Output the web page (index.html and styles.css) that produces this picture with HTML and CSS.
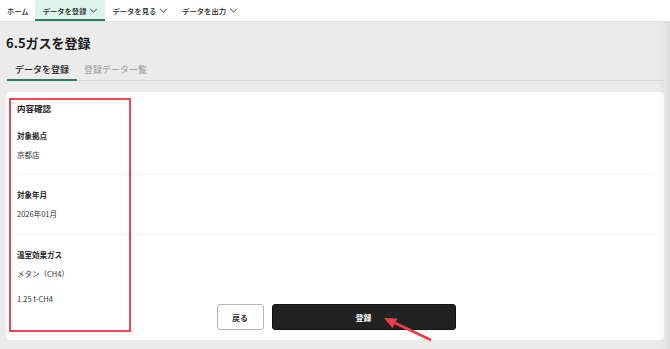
FILE: index.html
```html
<!DOCTYPE html>
<html lang="ja">
<head>
  <meta charset="UTF-8" />
  <title>6.5ガスを登録</title>
  <link rel="stylesheet" href="styles.css">
</head>
<body>
  <nav class="topnav">
    <a class="nav-item home">ホーム</a>
    <a class="nav-item active">データを登録 <svg class="chev" viewBox="0 0 10 6"><path d="M1 1l4 4 4-4" /></svg></a>
    <a class="nav-item">データを見る <svg class="chev" viewBox="0 0 10 6"><path d="M1 1l4 4 4-4" /></svg></a>
    <a class="nav-item">データを出力 <svg class="chev" viewBox="0 0 10 6"><path d="M1 1l4 4 4-4" /></svg></a>
  </nav>

  <main class="page">
    <h1 class="title">6.5ガスを登録</h1>

    <div class="tabs">
      <div class="tab active">データを登録</div>
      <div class="tab">登録データ一覧</div>
    </div>

    <section class="card">
      <h2 class="card-title">内容確認</h2>

      <div class="group first">
        <div class="label">対象拠点</div>
        <div class="value">京都店</div>
      </div>

      <div class="group second">
        <div class="label">対象年月</div>
        <div class="value">2026年01月</div>
      </div>

      <div class="group last">
        <div class="label">温室効果ガス</div>
        <div class="value">メタン（CH4）</div>
        <div class="value amount">1.25 t-CH4</div>
      </div>

      <div class="actions">
        <button class="btn btn-back">戻る</button>
        <button class="btn btn-submit">登録</button>
      </div>

      <div class="highlight"></div>
    </section>
  </main>

  <svg class="pointer" viewBox="0 0 670 349">
    <line x1="431" y1="340" x2="395" y2="323" />
    <path d="M384 318 L397.5 318.5 L392.5 328 Z" />
  </svg>

  <div class="edge-shadow"></div>
</body>
</html>
```

FILE: styles.css
```css
body {
  margin: 0;
  height: 349px;
  overflow: hidden;
  background: #ebebeb;
  font-family: "Noto Sans CJK JP", "Noto Sans", sans-serif;
  color: #222;
  position: relative;
}

.topnav {
  display: flex;
  height: 21px;
  background: #fff;
  box-shadow: 0 1px 1px rgba(0,0,0,0.06);
}

.nav-item {
  display: flex;
  align-items: center;
  gap: 2px;
  padding: 0 7px;
  font-size: 7.3px;
  font-weight: 500;
  color: #222;
  white-space: nowrap;
  box-sizing: border-box;
  height: 21px;
}

.nav-item.home {
  padding: 0 6px 0 7px;
}

.nav-item.active {
  background: #ddf4ec;
  border-bottom: 2px solid #2f7a60;
  padding: 2px 7px 0 8px;
}

.chev {
  width: 9px;
  height: 5px;
  margin-left: 1px;
  fill: none;
  stroke: #333;
  stroke-width: 1.2;
}

.page {
  padding: 0 6px;
}

.title {
  margin: 0;
  padding-top: 13px;
  font-size: 13px;
  line-height: 18px;
  font-weight: 700;
  color: #1a1a1a;
}

.tabs {
  display: flex;
  margin-top: 9px;
  margin-right: 1px;
  border-bottom: 1px solid #d6d6d6;
}

.tab {
  padding: 0 7px;
  font-size: 9px;
  line-height: 18px;
  color: #999;
}

.tab.active {
  color: #222;
  font-weight: 500;
  border-bottom: 2px solid #2f7a60;
  margin-bottom: -1px;
  padding: 0 8px;
  margin-left: 1px;
}

.card {
  position: relative;
  margin-top: 11px;
  height: 248px;
  box-sizing: border-box;
  padding: 10px 9px 12px 11px;
  background: #fff;
  border-radius: 4px;
}

.card-title {
  margin: 0;
  font-size: 8.5px;
  line-height: 12px;
  font-weight: 700;
}

.group {
  border-bottom: 1px solid #f1f1f1;
  padding-bottom: 13px;
  margin-top: 14px;
}

.group.first {
  margin-top: 16px;
}

.group.second {
  padding-bottom: 14px;
}

.group.last {
  border-bottom: none;
  padding-bottom: 0;
}

.label {
  font-size: 7.5px;
  line-height: 12px;
  font-weight: 700;
}

.value {
  margin-top: 7px;
  font-size: 7.5px;
  line-height: 12px;
  color: #333;
}

.value.amount {
  margin-top: 13px;
}

.actions {
  display: flex;
  justify-content: center;
  gap: 8px;
  margin-top: -1px;
}

.btn {
  height: 26px;
  border-radius: 3px;
  font-family: inherit;
  font-size: 8px;
  font-weight: 700;
}

.btn-back {
  width: 47px;
  background: #fff;
  border: 1px solid #b5b5b5;
  color: #333;
}

.btn-submit {
  width: 184px;
  background: #222;
  border: 1px solid #111;
  color: #fff;
}

/* annotation box */
.highlight {
  position: absolute;
  left: 3px;
  top: 6px;
  width: 122px;
  height: 234px;
  border: 2px solid #ef4452;
  box-sizing: border-box;
}

.pointer {
  position: absolute;
  left: 0;
  top: 0;
  width: 670px;
  height: 349px;
  pointer-events: none;
}

.pointer line {
  stroke: #ef3d4a;
  stroke-width: 2.5;
}

.pointer path {
  fill: #ef3d4a;
}

.edge-shadow {
  position: absolute;
  right: 0;
  top: 22px;
  width: 12px;
  height: 327px;
  background: linear-gradient(to right, rgba(0,0,0,0), rgba(0,0,0,0.06));
}
```
